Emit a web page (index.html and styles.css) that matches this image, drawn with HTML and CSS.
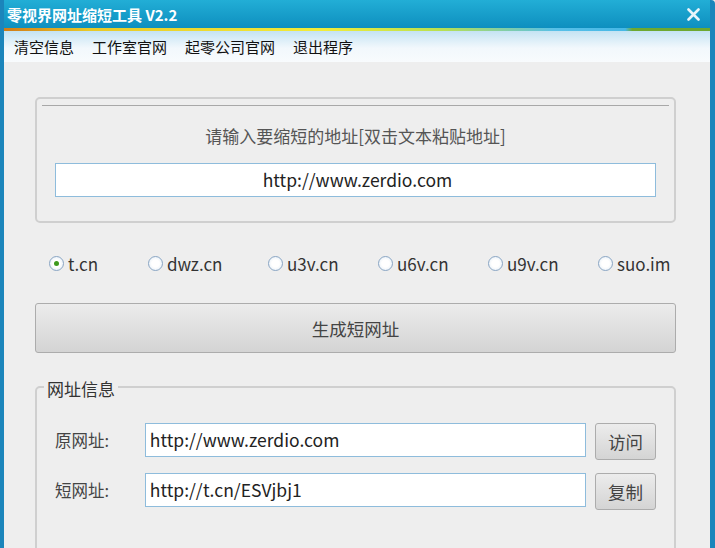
FILE: index.html
```html
<!DOCTYPE html>
<html lang="zh-CN">
  <head>
    <meta charset="UTF-8" />
    <title>零视界网址缩短工具 V2.2</title>
    <link rel="stylesheet" href="styles.css">
  </head>
  <body>
    <div class="window">
      <div class="titlebar">
        <span class="title">零视界网址缩短工具 V2.2</span>
        <span class="close">
          <svg width="13" height="13" viewBox="0 0 13 13">
            <path d="M1.5 1.5 L11.5 11.5 M11.5 1.5 L1.5 11.5" stroke="#e8f4fa" stroke-width="2.6" stroke-linecap="round" />
          </svg>
        </span>
      </div>
      <div class="stripe"></div>
      <div class="menubar">
        <span>清空信息</span>
        <span>工作室官网</span>
        <span>起零公司官网</span>
        <span>退出程序</span>
      </div>

      <div class="content">
        <div class="group input-group">
          <div class="group-line"></div>
          <div class="hint">请输入要缩短的地址[双击文本粘贴地址]</div>
          <div class="field centered">http://www.zerdio.com</div>
        </div>

        <div class="radios">
          <label class="radio r1"><span class="dot checked"></span>t.cn</label>
          <label class="radio r2"><span class="dot"></span>dwz.cn</label>
          <label class="radio r3"><span class="dot"></span>u3v.cn</label>
          <label class="radio r4"><span class="dot"></span>u6v.cn</label>
          <label class="radio r5"><span class="dot"></span>u9v.cn</label>
          <label class="radio r6"><span class="dot"></span>suo.im</label>
        </div>

        <div class="btn big">生成短网址</div>

        <div class="group info-group">
          <span class="legend">网址信息</span>
          <div class="row">
            <span class="label">原网址:</span>
            <div class="field">http://www.zerdio.com</div>
            <div class="btn small">访问</div>
          </div>
          <div class="row">
            <span class="label">短网址:</span>
            <div class="field">http://t.cn/ESVjbj1</div>
            <div class="btn small">复制</div>
          </div>
        </div>
      </div>
    </div>
  </body>
</html>
```

FILE: styles.css
```css
body {
  margin: 0;
  width: 715px;
  height: 548px;
  overflow: hidden;
  font-family: "Noto Sans CJK SC", "Open Sans", sans-serif;
  background: #eeeeee;
}
.window {
  height: 548px;
  display: flex;
  flex-direction: column;
  border-left: 4px solid #1b85bb;
  border-right: 5px solid #1b85bb;
  border-top-right-radius: 4px;
  box-sizing: border-box;
  background: #eeeeee;
  overflow: hidden;
}
.titlebar {
  height: 28px;
  flex: none;
  display: flex;
  align-items: center;
  justify-content: space-between;
  padding: 0 10px 0 3px;
  background: linear-gradient(#22aed6, #0e8fbf);
  color: #ffffff;
}
.title {
  font-size: 15px;
  font-weight: bold;
}
.close {
  display: flex;
  margin-top: 1px;
}
.stripe {
  height: 3px;
  flex: none;
  background: linear-gradient(90deg, #d07a18 0%, #e8c828 12%, #f2ec3a 45%, #b9e050 62%, #58c0e8 78%, #46b8e6 88%, #6ea830 89%, #6ea830 100%);
}
.menubar {
  height: 31px;
  flex: none;
  display: flex;
  align-items: center;
  gap: 18px;
  padding-left: 10px;
  font-size: 15px;
  color: #111;
  background: linear-gradient(#c4e3f3, #f2f8fc 55%, #f8fbfd);
}
.content {
  flex: 1;
  min-height: 0;
  overflow: hidden;
  padding: 35px 34px 0 31px;
}
.group {
  border: 2px solid #cfcfcf;
  border-radius: 5px;
  position: relative;
}
.input-group {
  height: 122px;
  padding: 0 18px;
}
.group-line {
  height: 1px;
  background: #a8a8a8;
  margin: 6px -13px 0;
}
.hint {
  text-align: center;
  font-size: 17px;
  color: #555;
  margin-top: 19px;
  line-height: 22px;
}
.field {
  background: #ffffff;
  border: 1px solid #8ebcdc;
  box-sizing: border-box;
  height: 34px;
  line-height: 32px;
  padding-left: 4px;
  font-size: 17.5px;
  color: #222;
}
.field.centered {
  text-align: center;
  margin-top: 16px;
}
.radios {
  display: flex;
  align-items: center;
  height: 80px;
  font-size: 17px;
  color: #333;
}
.radio {
  display: flex;
  align-items: center;
  gap: 4px;
}
.r1 { margin-left: 14px; width: 99px; }
.r2 { width: 120px; }
.r3 { width: 110px; }
.r4 { width: 110px; }
.r5 { width: 110px; }
.dot {
  width: 13px;
  height: 13px;
  border: 1px solid #8aa6c4;
  border-radius: 50%;
  background: radial-gradient(#ffffff 40%, #dde8f3);
  position: relative;
}
.dot.checked::after {
  content: "";
  position: absolute;
  left: 4px;
  top: 4px;
  width: 5px;
  height: 5px;
  border-radius: 50%;
  background: #3e9a1e;
}
.btn {
  display: flex;
  align-items: center;
  justify-content: center;
  border: 1px solid #acacac;
  border-radius: 3px;
  background: linear-gradient(#ececec, #d4d4d4);
  color: #444;
  box-sizing: border-box;
}
.btn.big {
  height: 50px;
  font-size: 17.5px;
}
.info-group {
  margin-top: 33px;
  height: 200px;
  padding: 35px 18px 0 18px;
}
.legend {
  position: absolute;
  top: -12px;
  left: 7px;
  padding: 0 3px;
  background: #eeeeee;
  font-size: 17px;
  color: #333;
}
.row {
  display: flex;
  align-items: flex-start;
  margin-bottom: 13px;
}
.label {
  width: 90px;
  font-size: 16.5px;
  color: #444;
  line-height: 34px;
}
.row .field {
  width: 442px;
}
.btn.small {
  width: 61px;
  height: 37px;
  margin-left: 9px;
  font-size: 17.5px;
}
```
